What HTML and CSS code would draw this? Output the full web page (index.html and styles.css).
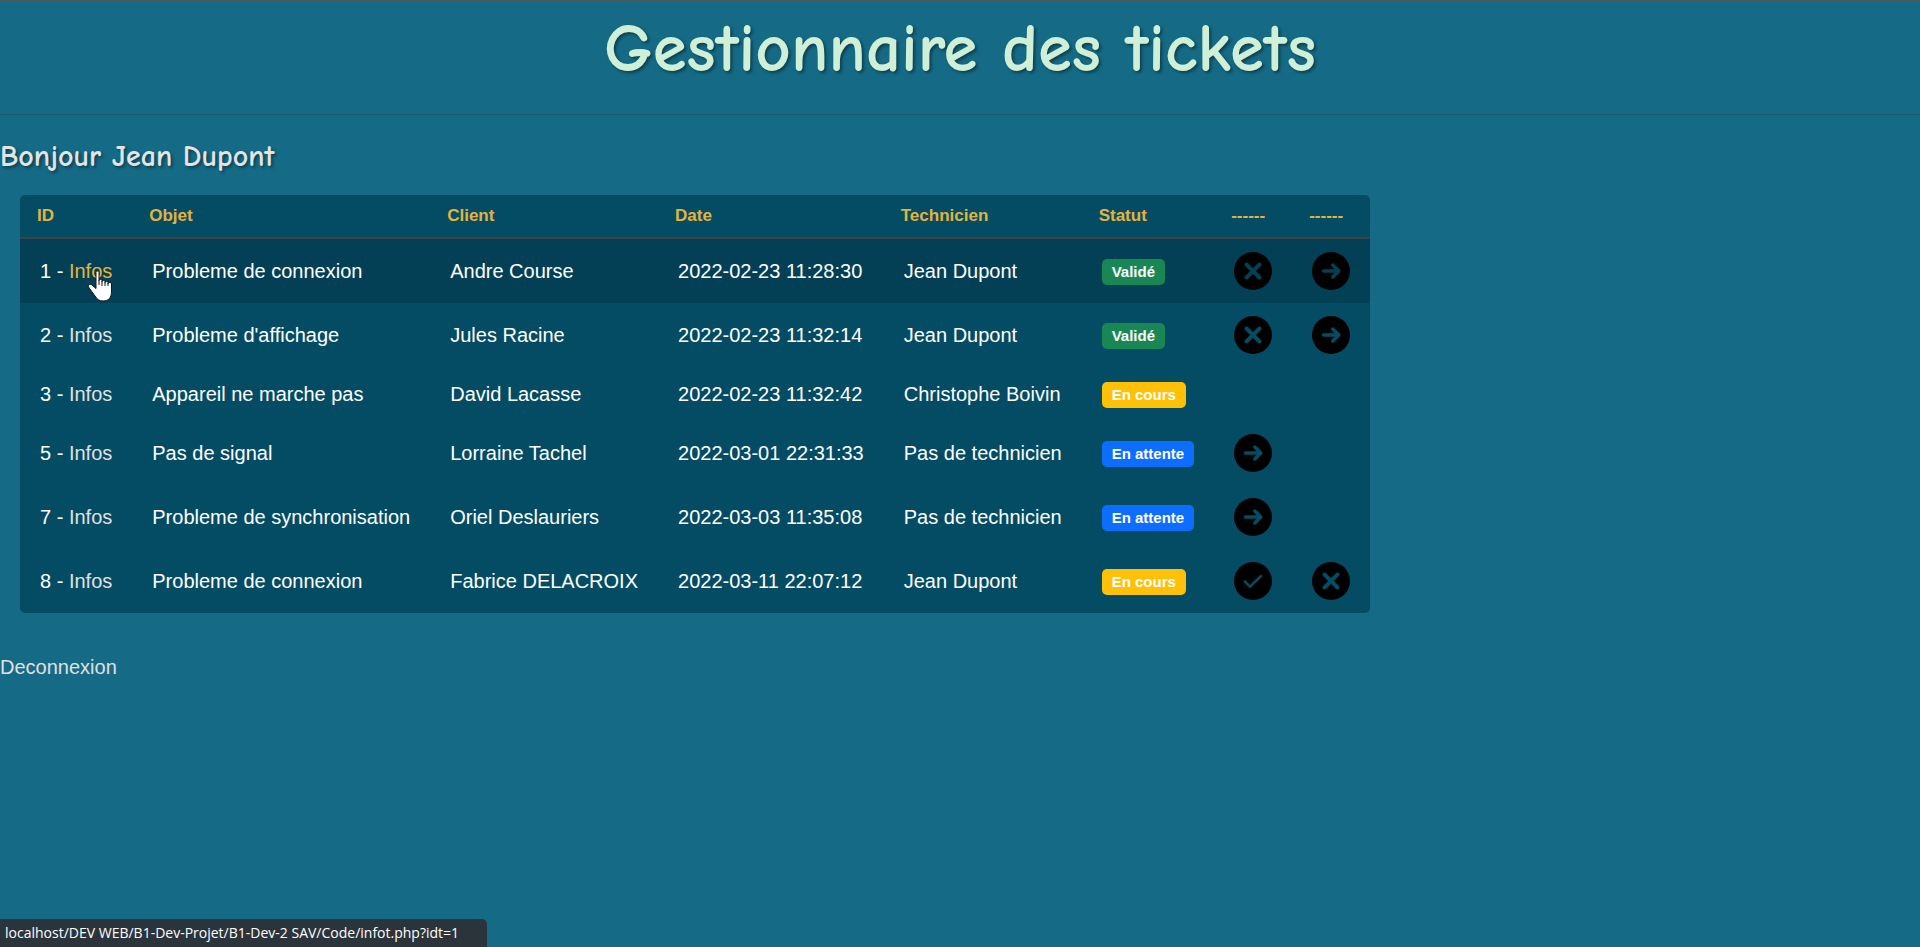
FILE: index.html
```html
<!DOCTYPE html>
<html lang="fr">
<head>
<meta charset="utf-8">
<title>Gestionnaire des tickets</title>
<link rel="stylesheet" href="styles.css">
</head>
<body>
<svg class="sprite" aria-hidden="true">
  <symbol id="cross" viewBox="0 0 38 38"><circle cx="19" cy="19" r="19"/><path d="M12.500 12.500l13 13M25.500 12.500l-13 13" class="glyph glyph-bold"/></symbol>
  <symbol id="arrow" viewBox="0 0 38 38"><circle cx="19" cy="19" r="19"/><path d="M11.500 19h15M20.800 13l6 6-6 6" class="glyph"/></symbol>
  <symbol id="check" viewBox="0 0 38 38"><circle cx="19" cy="19" r="19"/><path d="M10.800 19.500l5.200 5.200L27 14" class="glyph glyph-thin"/></symbol>
</svg>
<header class="page-header"><h1 class="page-title">Gestionnaire des tickets</h1></header>
<main>
  <h2 class="greeting">Bonjour Jean Dupont</h2>
  <table class="tickets">
    <thead>
      <tr><th>ID</th><th>Objet</th><th>Client</th><th>Date</th><th>Technicien</th><th>Statut</th><th>------</th><th>------</th></tr>
    </thead>
    <tbody>
      <tr class="is-hovered"><td>1 - <span class="pointed"><a href="#t1" class="link link-active">Infos</a><svg class="cursor" viewBox="0 0 26 32" aria-hidden="true"><path d="M9 2.500c0-2 3-2 3 0v8c0-1.500 3-1.500 3 0v1c0-1.500 3-1.500 3 0v1c0-1.500 3-1.500 3 0v1c0-1.500 3.500-1.500 3.500 .5v7c0 7-3 10-8.500 10-4 0-6-2-8-5l-6.500-9c-1-2 1.500-3.500 3.500-2l4 3.500z"/><path d="M12 10v5M15 11v5M18 12v4M21 13v3" class="cursor-line"/></svg></span></td><td>Probleme de connexion</td><td>Andre Course</td><td>2022-02-23 11:28:30</td><td>Jean Dupont</td><td><span class="badge done">Validé</span></td><td class="action"><button type="button" class="icon-btn" aria-label="Annuler"><svg><use href="#cross"/></svg></button></td><td class="action"><button type="button" class="icon-btn" aria-label="Transférer"><svg><use href="#arrow"/></svg></button></td></tr>
      <tr><td>2 - <a href="#t2" class="link">Infos</a></td><td>Probleme d'affichage</td><td>Jules Racine</td><td>2022-02-23 11:32:14</td><td>Jean Dupont</td><td><span class="badge done">Validé</span></td><td class="action"><button type="button" class="icon-btn" aria-label="Annuler"><svg><use href="#cross"/></svg></button></td><td class="action"><button type="button" class="icon-btn" aria-label="Transférer"><svg><use href="#arrow"/></svg></button></td></tr>
      <tr><td>3 - <a href="#t3" class="link">Infos</a></td><td>Appareil ne marche pas</td><td>David Lacasse</td><td>2022-02-23 11:32:42</td><td>Christophe Boivin</td><td><span class="badge current">En cours</span></td><td></td><td></td></tr>
      <tr><td>5 - <a href="#t5" class="link">Infos</a></td><td>Pas de signal</td><td>Lorraine Tachel</td><td>2022-03-01 22:31:33</td><td>Pas de technicien</td><td><span class="badge waiting">En attente</span></td><td class="action"><button type="button" class="icon-btn" aria-label="Transférer"><svg><use href="#arrow"/></svg></button></td><td></td></tr>
      <tr><td>7 - <a href="#t7" class="link">Infos</a></td><td>Probleme de synchronisation</td><td>Oriel Deslauriers</td><td>2022-03-03 11:35:08</td><td>Pas de technicien</td><td><span class="badge waiting">En attente</span></td><td class="action"><button type="button" class="icon-btn" aria-label="Transférer"><svg><use href="#arrow"/></svg></button></td><td></td></tr>
      <tr><td>8 - <a href="#t8" class="link">Infos</a></td><td>Probleme de connexion</td><td>Fabrice DELACROIX</td><td>2022-03-11 22:07:12</td><td>Jean Dupont</td><td><span class="badge current">En cours</span></td><td class="action"><button type="button" class="icon-btn" aria-label="Valider"><svg><use href="#check"/></svg></button></td><td class="action"><button type="button" class="icon-btn" aria-label="Annuler"><svg><use href="#cross"/></svg></button></td></tr>
    </tbody>
  </table>
  <a href="#logout" class="link logout">Deconnexion</a>
</main>
<div class="status-bar">localhost/DEV WEB/B1-Dev-Projet/B1-Dev-2 SAV/Code/infot.php?idt=1</div>
</body>
</html>
```
FILE: styles.css
```css
* { box-sizing: border-box; }
body {
  margin: 0;
  min-height: 100vh;
  background: #156a85;
  color: #fff;
  font: 20px/25px "Liberation Sans", Arial, sans-serif;
}
.sprite { position: absolute; width: 0; height: 0; }
.page-header {
  padding: 0 0 18px;
  border-top: 1px solid #4b5a60;
  border-bottom: 1px solid #1b5d6d;
  text-align: center;
}
.page-title {
  margin: 0;
  color: #cff0d6;
  font: 700 69px/95px "Comic Sans MS", "Comic Neue", "Open Sans", sans-serif;
  text-shadow: 2px 2px 3px #0d4150;
}
.greeting {
  margin: 24px 0 20px;
  color: #e4e4e4;
  font: 700 30px/36px "Comic Sans MS", "Comic Neue", "Open Sans", sans-serif;
  text-shadow: 2px 2px 3px #0d4150;
}
.tickets {
  margin-left: 20px;
  border-spacing: 0;
  border-radius: 5px;
  overflow: hidden;
  background: #044c63;
  white-space: nowrap;
}
.tickets th {
  height: 44px;
  padding: 0 17px;
  border-bottom: 2px solid #433f43;
  color: #e3b341;
  font-size: 17px;
  line-height: 20px;
  text-align: left;
}
.tickets td { padding: 14px 20px 13px; }
.tickets td.action { padding: 13px 20px; }
.is-hovered { background: #034055; }
.link { color: #e0e0e0; text-decoration: none; }
.link-active { color: #e3b341; }
.pointed { position: relative; }
.cursor {
  position: absolute;
  left: 18px;
  top: 10px;
  width: 26px;
  height: 32px;
  fill: #fff;
  stroke: #101820;
}
.cursor-line { fill: none; }
.badge {
  display: inline-block;
  padding: 5px 10px;
  border-radius: 5px;
  font-size: 15px;
  font-weight: 700;
  line-height: 16px;
  vertical-align: middle;
}
.done { background: #198754; }
.current { background: #ffc107; }
.waiting { background: #0d6efd; }
.icon-btn {
  display: block;
  padding: 0;
  border: 0;
  background: none;
  color: #044c63;
  cursor: pointer;
}
.is-hovered .icon-btn { color: #034055; }
.icon-btn svg { display: block; width: 38px; height: 38px; fill: #000; }
.glyph { fill: none; stroke: currentColor; stroke-width: 3.5; stroke-linecap: round; stroke-linejoin: round; }
.glyph-bold { stroke-width: 4; }
.glyph-thin { stroke-width: 2.5; }
.logout { display: inline-block; margin-top: 42px; }
.status-bar {
  position: fixed;
  left: 0;
  bottom: 0;
  padding: 2px 28px 2px 5px;
  border-radius: 0 5px 0 0;
  background: #2b343b;
  font: 14px/24px "Open Sans", sans-serif;
}
```
